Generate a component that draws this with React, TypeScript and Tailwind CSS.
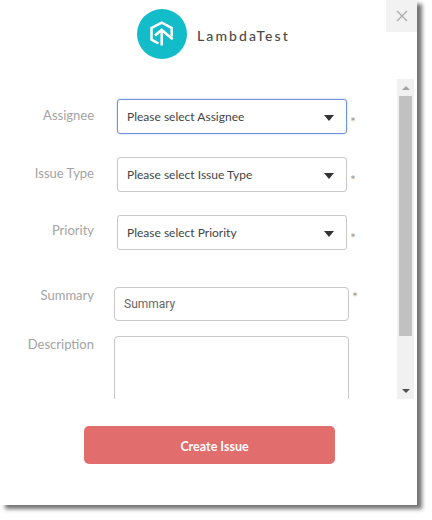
const labelCls = 'w-[94px] shrink-0 text-right text-[13px] leading-[20px] text-[#a3a3a3]'

function Star({ className }: { className: string }) {
  return <span className={`text-[14px] leading-none text-[#9a9a9a] ${className}`}>*</span>
}

function SelectBox({ text, focused }: { text: string; focused?: boolean }) {
  return (
    <div
      className={`ml-[23px] flex h-[35px] w-[230px] items-center justify-between rounded-[3px] border pl-[9px] pr-[12px] text-[12px] text-[#444] ${
        focused ? 'border-[#6f94d8] shadow-[0_0_2px_rgba(111,148,216,0.6)]' : 'border-[#c8c8c8]'
      }`}
    >
      <span>{text}</span>
      <span className="mt-[2px] h-0 w-0 border-x-[5.5px] border-t-[6px] border-x-transparent border-t-[#333]" />
    </div>
  )
}

function SelectRow({ label, text, focused, mb, labelTop }: { label: string; text: string; focused?: boolean; mb: string; labelTop: string }) {
  return (
    <div className={`flex items-start ${mb}`}>
      <div className={`${labelCls} ${labelTop}`}>{label}</div>
      <SelectBox text={text} focused={focused} />
      <Star className="ml-[3px] mt-[16px]" />
    </div>
  )
}

function Logo() {
  return (
    <div className="flex h-[50px] w-[50px] items-center justify-center rounded-full bg-[#13bcc9]">
      <svg width="26" height="26" viewBox="0 0 26 26" fill="none" stroke="#fff" strokeWidth="2.5">
        <path d="M9.5 22.5 L2.5 18.7 V7 L12.7 1.7 L22.7 7 V15.5" />
        <path d="M12.7 24.5 V9.5 M6 14.5 L12.7 9 L23.7 18.3" />
      </svg>
    </div>
  )
}

export default function App() {
  return (
    <div className="h-[520px] w-[432px] overflow-hidden bg-white font-['Lato',sans-serif]">
      <div className="relative flex h-[505px] w-[417px] flex-col bg-white shadow-[5px_4px_4px_rgba(70,70,70,0.75)]">
        <div className="absolute right-0 top-0 flex h-[32px] w-[31px] items-center justify-center bg-[#f2f2f2]">
          <svg width="12" height="12" viewBox="0 0 12 12" stroke="#a9a9a9" strokeWidth="1.2">
            <path d="M1 1 L11 11 M11 1 L1 11" />
          </svg>
        </div>

        <div className="flex h-[79px] shrink-0 items-start pl-[137px] pt-[9px]">
          <Logo />
          <span className="ml-[10px] mt-[17px] text-[14px] font-medium leading-[20px] tracking-[2.1px] text-[#4a4a4a]">
            LambdaTest
          </span>
        </div>

        <div className="flex h-[320px] shrink-0">
          <div className="w-[397px] overflow-hidden pt-[20px]">
            <SelectRow label="Assignee" text="Please select Assignee" focused mb="mb-[23px]" labelTop="mt-[6px]" />
            <SelectRow label="Issue Type" text="Please select Issue Type" mb="mb-[23px]" labelTop="mt-[6px]" />
            <SelectRow label="Priority" text="Please select Priority" mb="mb-[37px]" labelTop="mt-[5px]" />

            <div className="mb-[15px] flex items-start">
              <div className={`${labelCls} -mt-[2px]`}>Summary</div>
              <div className="ml-[20px] flex h-[34px] w-[235px] items-center rounded-[4px] border border-[#c8c8c8] pl-[9px] font-['Roboto',sans-serif] text-[12px] text-[#666]">
                Summary
              </div>
              <Star className="ml-[3px] mt-[3px]" />
            </div>

            <div className="flex items-start">
              <div className={`${labelCls} -mt-[2px]`}>Description</div>
              <div className="ml-[20px] h-[100px] w-[235px] rounded-[4px] border border-[#c8c8c8]" />
            </div>
          </div>

          <div className="flex h-full w-[17px] flex-col items-center bg-[#f1f1f1]">
            <div className="flex h-[17px] w-full shrink-0 items-center justify-center">
              <span className="h-0 w-0 border-x-[4px] border-b-[4px] border-x-transparent border-b-[#a3a3a3]" />
            </div>
            <div className="h-[240px] w-[13px] bg-[#c1c1c1]" />
            <div className="flex-1" />
            <div className="flex h-[17px] w-full shrink-0 items-center justify-center">
              <span className="h-0 w-0 border-x-[4px] border-t-[4px] border-x-transparent border-t-[#505050]" />
            </div>
          </div>
        </div>

        <div className="flex justify-center pt-[27px]">
          <button className="ml-[2px] h-[38px] w-[251px] rounded-[5px] bg-[#e26d6d] pl-[10px] pt-[4px] text-[12.5px] font-bold text-white">
            Create Issue
          </button>
        </div>
      </div>
    </div>
  )
}
